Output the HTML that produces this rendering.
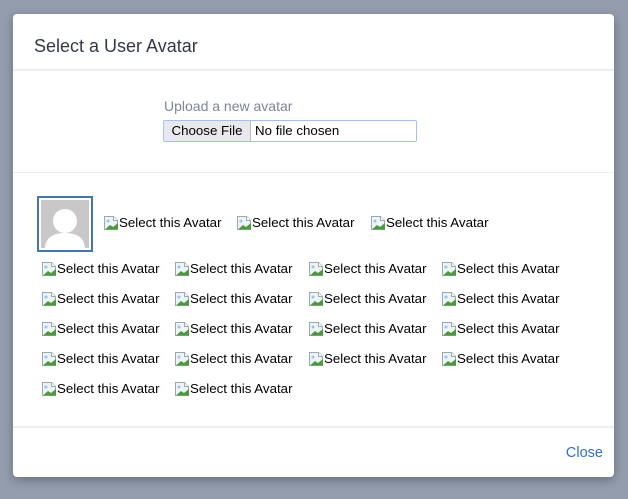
<!DOCTYPE html>
<html><head><style>
body{margin:0;width:628px;height:499px;background:#949dae;font-family:"Liberation Sans",Arial,sans-serif;position:relative;overflow:hidden}
.m{position:absolute;left:13px;top:14px;width:601px;height:463px;background:#fff;border-radius:4px;box-shadow:0 3px 10px rgba(0,0,0,.3)}
.h{position:absolute;left:21px;top:22px;font-size:18px;color:#333a45}
.ln{position:absolute;left:0;width:601px;height:2px;background:#eceef3}
.lab{position:absolute;left:151px;top:84px;font-size:14px;color:#7b8696}
.fi{position:absolute;left:150px;top:106px;width:252px;height:20px;border:1px solid #9fc2f3;border-radius:2px;font-size:13.3px}
.btn{position:absolute;left:0;top:0;width:86px;height:20px;background:#e9e9ed;border-right:1px solid #bbb;text-align:center;line-height:20px;color:#000}
.nf{position:absolute;left:91px;top:0;line-height:20px;color:#000}
.av{position:absolute;left:24px;top:182px;width:52px;height:52px;border:2px solid #3f78b0;background:#fff}
.av div{position:absolute;left:2px;top:2px;width:48px;height:48px;background:#c8c8c8;overflow:hidden}
.it{position:absolute;font-size:13.3px;color:#000;height:16px;line-height:16px;white-space:nowrap}
.it svg{vertical-align:top;margin-right:0}
.cl{position:absolute;right:11px;top:431px;font-size:14.5px;color:#2f6fd0}
</style></head><body>
<div class="m">
<div class="h">Select a User Avatar</div>
<div class="ln" style="top:55px"></div>
<div class="lab">Upload a new avatar</div>
<div class="fi"><div class="btn">Choose File</div><div class="nf">No file chosen</div></div>
<div class="ln" style="top:158px;height:1px"></div>
<div class="av"><div><svg width="48" height="48"><circle cx="24" cy="21" r="12" fill="#fff"/><path d="M4 48 Q5 33 24 33 Q43 33 44 48Z" fill="#fff"/></svg></div></div>
<div class="ln" style="top:412px"></div>
<div class="cl">Close</div>
</div>
<svg width="0" height="0" style="position:absolute"><defs><symbol id="b" viewBox="0 0 16 16"><path d="M1.5 1.5h9l4 4v9h-13z" fill="#eef3f8" stroke="#9aa"/><path d="M10.5 1.5v4h4" fill="#fff" stroke="#9aa"/><path d="M2 14.5 L7 10 L10 12 L15 8 V14.5Z" fill="#4a9a3a"/><circle cx="5" cy="6" r="1.5" fill="#9cc3e8"/></symbol></defs></svg>
<div id="g"></div>
<script>
var h='',pos=[[103,215],[236,215],[370,215]];
var xs=[41,174,308,441],ys=[261,291,321,351,381];
ys.forEach(function(y,r){xs.forEach(function(x,c){if(r==4&&c>1)return;pos.push([x,y]);});});
pos.forEach(function(p){h+='<div class="it" style="left:'+p[0]+'px;top:'+p[1]+'px"><svg width="16" height="16"><use href="#b"/></svg>Select this Avatar</div>';});
document.getElementById('g').innerHTML=h;
</script>
</body></html>
